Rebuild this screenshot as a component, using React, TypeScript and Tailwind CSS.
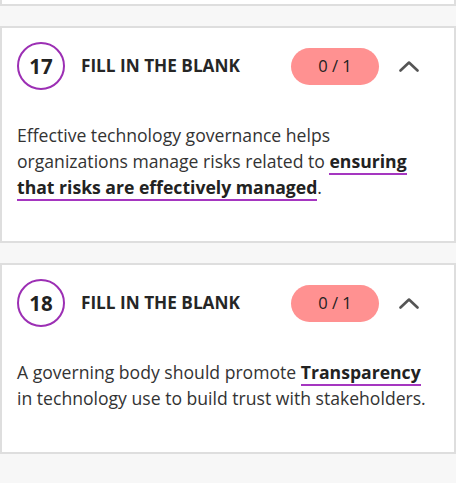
import React from "react";

interface Question {
  num: number;
  before: string;
  answer: string;
  after: string;
}

const questions: Question[] = [
  {
    num: 17,
    before: "Effective technology governance helps organizations manage risks related to ",
    answer: "ensuring that risks are effectively managed",
    after: ".",
  },
  {
    num: 18,
    before: "A governing body should promote ",
    answer: "Transparency",
    after: " in technology use to build trust with stakeholders.",
  },
];

function QuestionCard({ q }: { q: Question }) {
  return (
    <div className="bg-white border-2 border-[#dedede] pl-[15px] pr-[15px] pt-[14px] pb-[41px]">
      <div className="flex items-center">
        <div className="w-[48px] h-[48px] rounded-full border-2 border-[#9c2fb4] flex items-center justify-center text-[20.5px] font-bold text-[#222] shrink-0">
          {q.num}
        </div>
        <div className="ml-4 text-[17.2px] font-bold text-[#262626]">
          FILL IN THE BLANK
        </div>
        <div className="ml-auto w-[88px] h-[37px] rounded-full bg-[#ff9191] flex items-center justify-center text-[16.5px] text-[#222]">
          0 / 1
        </div>
        <button className="ml-[20px] mr-[20px] w-[20px] h-[20px] flex items-center justify-center">
          <svg width="20" height="12" viewBox="0 0 20 12" fill="none">
            <polyline
              points="1.5,10.5 10,2.5 18.5,10.5"
              stroke="#555"
              strokeWidth="2.6"
              strokeLinecap="round"
              strokeLinejoin="round"
            />
          </svg>
        </button>
      </div>
      <p className="mt-[32px] text-[17.6px] leading-[26px] text-[#333] pr-[2px]">
        {q.before}
        <span className="font-bold text-[#222] border-b-2 border-[#a536c0]">
          {q.answer}
        </span>
        {q.after}
      </p>
    </div>
  );
}

export default function App() {
  return (
    <div
      className="w-[456px] bg-[#f7f7f7] pb-[29px] flex flex-col gap-5"
      style={{ fontFamily: '"Open Sans", "Noto Sans", sans-serif' }}
    >
      <div className="h-[6px] bg-white border-2 border-t-0 border-[#dedede]" />
      {questions.map((q) => (
        <QuestionCard key={q.num} q={q} />
      ))}
    </div>
  );
}
